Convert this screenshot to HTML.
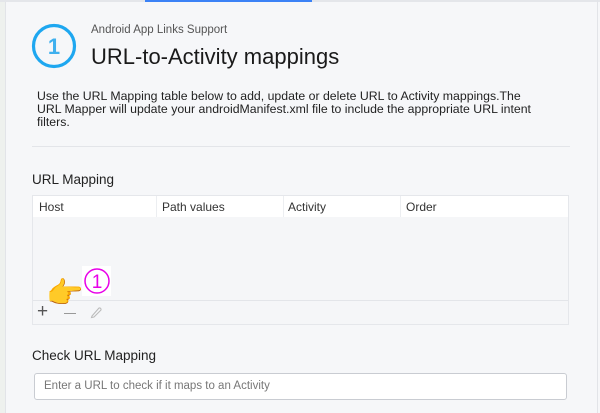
<!DOCTYPE html>
<html><head><style>
body{margin:0;width:600px;height:413px;background:#f6f7f9;font-family:"Liberation Sans","DejaVu Sans",sans-serif;position:relative;overflow:hidden;color:#222}
.a{position:absolute}
</style></head><body>
<div class="a" style="left:0;top:0;width:5px;height:413px;background:#eef1ee;border-right:1px solid #e2e4e8"></div>
<div class="a" style="left:0;top:0;width:600px;height:2px;background:#e4e6ea"></div>
<div class="a" style="left:145px;top:0;width:167px;height:2px;background:#3b82f6"></div>
<div class="a" style="left:597px;top:0;width:1px;height:413px;background:#e2e4e8"></div>
<svg class="a" style="left:31px;top:23px" width="46" height="46"><circle cx="23" cy="23" r="20.5" fill="none" stroke="#1ea7f0" stroke-width="3.2"/><text x="23" y="31" text-anchor="middle" font-family="Liberation Sans" font-weight="bold" font-size="22" fill="#3fb0ee">1</text></svg>
<div class="a" style="left:91px;top:24px;font-size:11.5px;color:#555">Android App Links Support</div>
<div class="a" style="left:91px;top:44px;font-size:22px;color:#1a1a1a">URL-to-Activity mappings</div>
<div class="a" style="left:37px;top:90px;white-space:nowrap;font-size:12.3px;line-height:13px;color:#222">Use the URL Mapping table below to add, update or delete URL to Activity mappings.The<br>URL Mapper will update your androidManifest.xml file to include the appropriate URL intent<br>filters.</div>
<div class="a" style="left:32px;top:146px;width:538px;height:1px;background:#e3e5e9"></div>
<div class="a" style="left:32px;top:172px;font-size:13.5px;color:#222">URL Mapping</div>
<div class="a" style="left:32px;top:195px;width:537px;height:130px;border:1px solid #e5e7eb;box-sizing:border-box;background:#f5f6f8">
 <div style="height:21px;background:#fff;position:relative;font-size:12px;color:#333">
  <span class="a" style="left:6px;top:4px">Host</span>
  <span class="a" style="left:123px;top:0;width:1px;height:21px;background:#eceef1"></span>
  <span class="a" style="left:129px;top:4px">Path values</span>
  <span class="a" style="left:250px;top:0;width:1px;height:21px;background:#eceef1"></span>
  <span class="a" style="left:255px;top:4px">Activity</span>
  <span class="a" style="left:367px;top:0;width:1px;height:21px;background:#eceef1"></span>
  <span class="a" style="left:373px;top:4px">Order</span>
 </div>
 <div class="a" style="left:0;top:104px;width:535px;height:1px;background:#e3e5e9"></div>
</div>
<div class="a" style="left:37px;top:302px;font-size:19px;color:#555;line-height:19px">+</div>
<div class="a" style="left:64px;top:313px;width:12px;height:1px;background:#999"></div>
<svg class="a" style="left:89px;top:305px" width="14" height="14"><path d="M3 11 L10 3 A1.6 1.6 0 0 1 12 5 L5 12 L2.5 12.5 Z" fill="none" stroke="#bbb" stroke-width="1.1"/></svg>
<div class="a" style="left:46px;top:276px;font-size:30px;line-height:36px;font-family:'Noto Color Emoji','DejaVu Sans',sans-serif;color:#f2b233">👉</div>
<div class="a" style="left:82px;top:266px;width:29px;height:30px;background:#fff"></div>
<svg class="a" style="left:83px;top:267px" width="28" height="28"><circle cx="14" cy="14" r="12" fill="none" stroke="#e800e8" stroke-width="1.5"/><text x="14" y="21" text-anchor="middle" font-family="Liberation Sans" font-size="19" fill="#e800e8">1</text></svg>
<div class="a" style="left:32px;top:348px;font-size:13.5px;color:#222">Check URL Mapping</div>
<div class="a" style="left:34px;top:373px;width:533px;height:27px;border:1px solid #c9ccd2;border-radius:3px;box-sizing:border-box;background:#fff;font-size:11.5px;color:#777;padding:6px 0 0 9px">Enter a URL to check if it maps to an Activity</div>
</body></html>
